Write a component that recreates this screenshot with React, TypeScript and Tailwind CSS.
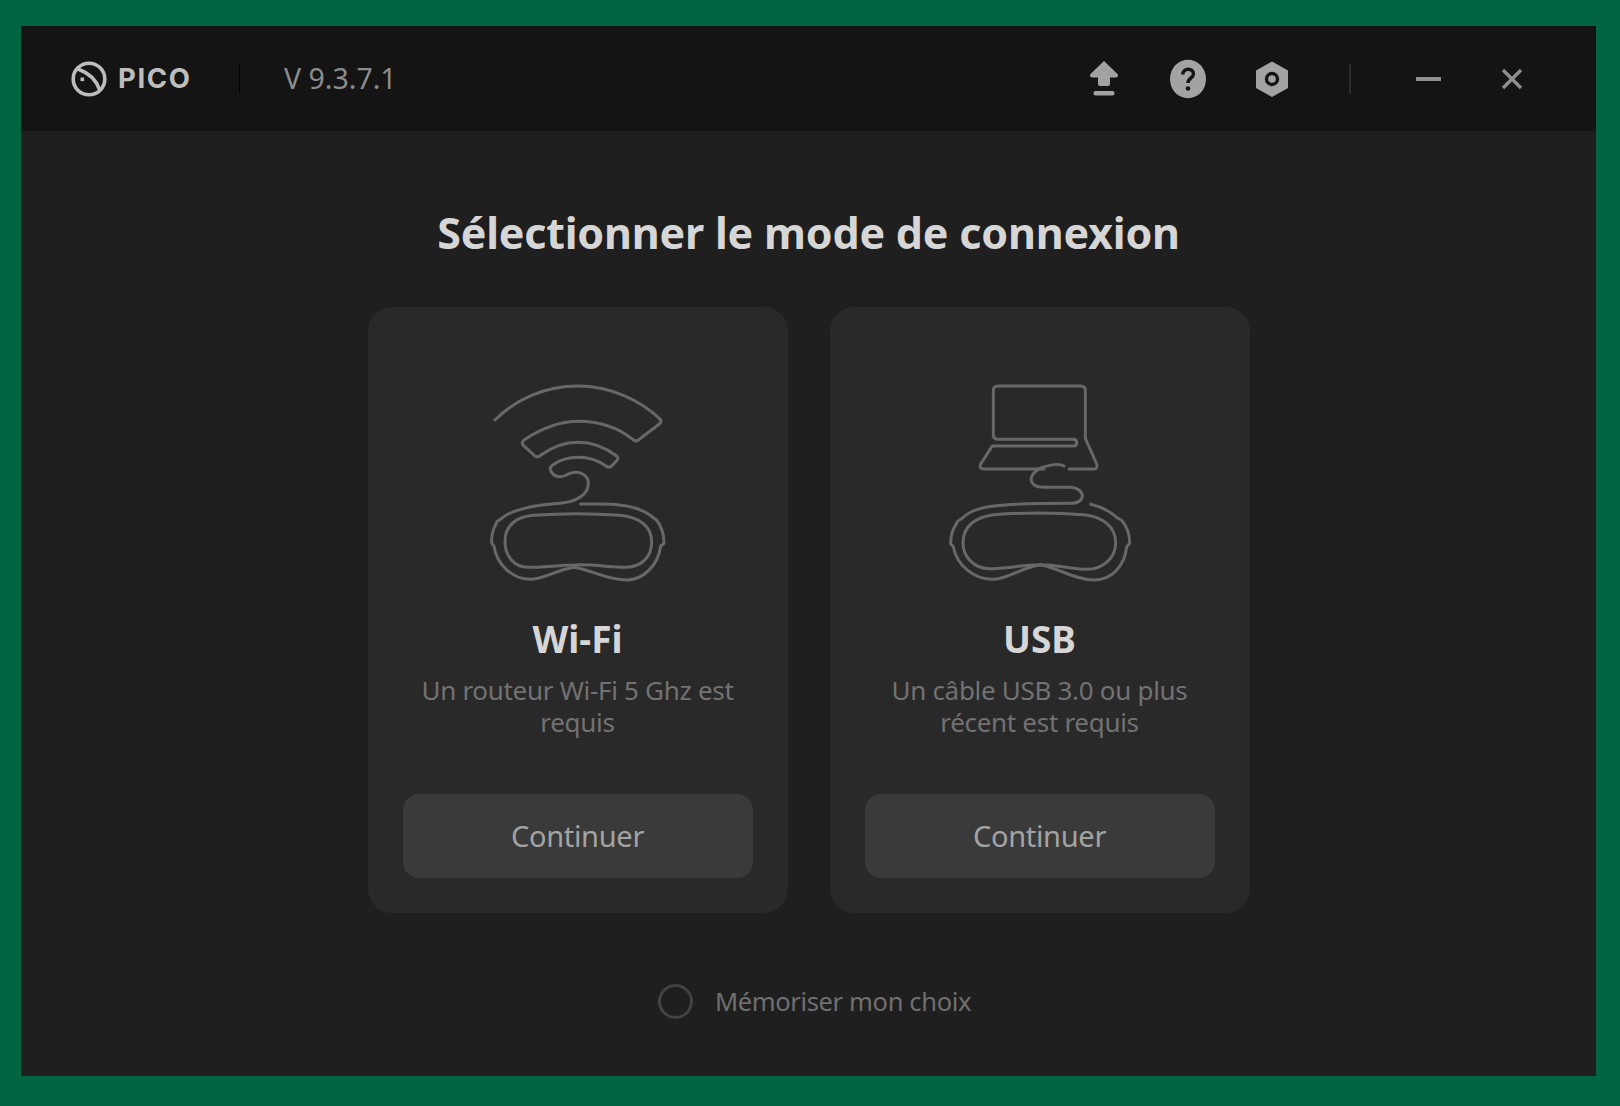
const headset =
  "C 200 405, 130 415, 95 445 L 88 450 Q 80 452 78 462 C 68 480, 64 500, 65 520 L 72 528 C 80 585, 130 630, 185 628 C 225 625, 260 600, 312 592 C 365 600, 410 630, 470 630 C 520 630, 565 585, 572 528 L 582 520 C 582 495, 575 470, 560 450 L 552 445";

function WifiIcon() {
  return (
    <svg width="210" height="220" viewBox="9 0 630 660" fill="none" stroke="#686868" strokeWidth="9" strokeLinecap="round" strokeLinejoin="round">
      <path d={`M75 150 C 140 85, 230 48, 322 48 C 420 48, 510 90, 570 147 Q 576 155 568 162 L 505 210 Q 497 216 488 208 C 440 170, 385 154, 325 154 C 265 154, 215 175, 162 210 Q 153 218 160 226 L 195 258 Q 204 264 212 256 C 245 232, 285 217, 325 217 C 365 217, 405 232, 440 258 Q 447 266 440 272 L 425 288 Q 417 295 408 288 C 385 272, 355 262, 325 262 C 295 262, 270 270, 248 285 Q 235 295 245 307 C 255 322, 275 325, 295 312 C 320 300, 355 310, 355 340 C 355 375, 320 395, 270 400 ${headset} C 520 415, 470 402, 400 402 L 332 402`} />
      <path d="M175 592 C 130 592, 105 555, 105 515 C 105 465, 140 440, 190 436 C 270 430, 370 430, 450 436 C 510 442, 545 470, 545 515 C 545 560, 515 592, 465 592 C 420 592, 370 582, 312 585 C 270 585, 220 592, 175 592 Z" />
    </svg>
  );
}

function UsbIcon() {
  return (
    <svg width="210" height="220" viewBox="13 0 630 660" fill="none" stroke="#686868" strokeWidth="9" strokeLinecap="round" strokeLinejoin="round">
      <path d="M464 205 L 464 62 Q 464 48 450 48 L 202 48 Q 188 48 188 62 L 188 195 Q 188 208 205 208 L 428 208 Q 438 208 438 218 Q 438 228 428 228 L 185 228 L 150 282 Q 145 297 160 297 L 340 297" />
      <path d="M464 205 L 498 282 Q 503 297 488 297 L 415 297" />
      <path d="M400 288 C 385 278, 345 285, 320 300 C 295 318, 290 350, 340 352 L 420 352 C 465 355, 468 400, 420 400 C 340 400, 260 400, 190 408 C 130 415, 110 430, 92 447 L 86 450 Q 78 454 76 464 C 64 480, 60 500, 60 522 L 68 530 C 78 585, 130 630, 190 628 C 235 625, 275 592, 328 584 C 380 592, 430 630, 490 630 C 545 630, 583 585, 588 530 L 597 520 C 597 495, 590 470, 572 450 L 562 445 C 540 425, 510 410, 480 403" />
      <path d="M175 596 C 130 596, 97 560, 97 518 C 97 465, 140 440, 190 434 C 270 428, 380 428, 460 434 C 515 440, 555 470, 555 518 C 555 565, 515 598, 470 598 C 425 598, 375 584, 328 584 C 280 584, 225 596, 175 596 Z" />
    </svg>
  );
}

function PicoLogo() {
  return (
    <svg width="38" height="38" viewBox="0 0 38 38" fill="none" stroke="#bdbdbd" strokeWidth="3.6" strokeLinecap="round">
      <circle cx="19" cy="19" r="15.8" />
      <path d="M9 9.5 C 16 12, 25 17, 29.5 29.5" />
      <rect x="10.5" y="17.5" width="3.6" height="3.6" fill="#bdbdbd" stroke="none" />
    </svg>
  );
}

function UploadIcon() {
  return (
    <svg width="40" height="40" viewBox="0 0 40 40" fill="#a3a3a3">
      <path d="M20 2 L 33.5 15 Q 35 18 32 18.5 L 26 18.5 L 26 25 Q 26 27 24 27 L 16 27 Q 14 27 14 25 L 14 18.5 L 8 18.5 Q 5 18 6.5 15 Z" />
      <rect x="9.5" y="32" width="21" height="4.5" rx="2" />
    </svg>
  );
}

function HelpIcon() {
  return (
    <svg width="40" height="40" viewBox="0 0 40 40">
      <ellipse cx="20" cy="20" rx="18" ry="19.3" fill="#a3a3a3" />
      <path d="M14.8 15.5 C 14.8 8.5, 25.5 8.5, 25.5 15 C 25.5 19, 20 19, 20 24" fill="none" stroke="#141414" strokeWidth="3.4" />
      <circle cx="20" cy="29.5" r="2.3" fill="#141414" />
    </svg>
  );
}

function GearIcon() {
  return (
    <svg width="40" height="40" viewBox="0 0 40 40">
      <path d="M20 2.5 L 36 11.5 L 36 29 L 20 38 L 4 29 L 4 11.5 Z" fill="#a3a3a3" />
      <circle cx="20" cy="20" r="5.5" fill="#a3a3a3" stroke="#141414" strokeWidth="3.4" />
    </svg>
  );
}

function ConnectionCard({ icon, title, lines }: { icon: React.ReactNode; title: string; lines: string[] }) {
  return (
    <div className="flex h-[606px] w-[420px] flex-col items-center rounded-[24px] bg-[#292929] px-[35px] pt-[63px] pb-[35px]">
      {icon}
      <h2 className="mt-[24px] text-[37px] leading-[50px] font-bold text-[#d6d6d6]">{title}</h2>
      <p className="mt-[10px] text-center text-[26px] leading-[32px] tracking-[-0.3px] text-[#727272]">
        {lines.map((l) => (
          <span key={l} className="block whitespace-nowrap">
            {l}
          </span>
        ))}
      </p>
      <button className="mt-auto h-[84px] w-[350px] rounded-[16px] bg-[#3a3a3a] text-[29px] tracking-[-0.3px] text-[#a3a3a3]">Continuer</button>
    </div>
  );
}

export default function App() {
  return (
    <div className="h-[1106px] w-[1620px] bg-[#016541] pt-[26px] pr-[24px] pb-[30px] pl-[21px] font-['Noto_Sans',sans-serif]">
      <div className="flex h-full flex-col bg-[#1f1f1f]">
        <header className="flex h-[105px] shrink-0 items-center bg-[#141414] pr-[64px] pl-[49px]">
          <PicoLogo />
          <span className="ml-[10px] w-[77px] font-['Inter',sans-serif] text-[27.5px] font-bold tracking-[1.6px] text-[#bdbdbd]">PICO</span>
          <div className="ml-[44px] h-[28px] w-px bg-black" />
          <span className="ml-[44px] text-[28.5px] text-[#8c8c8c]">V 9.3.7.1</span>
          <div className="ml-auto flex items-center">
            <UploadIcon />
            <div className="ml-[44px]">
              <HelpIcon />
            </div>
            <div className="ml-[44px]">
              <GearIcon />
            </div>
            <div className="ml-[57px] h-[30px] w-[2px] bg-[#2c2c2c]" />
            <div className="ml-[57px] flex h-[40px] w-[40px] items-center justify-center">
              <div className="h-[4px] w-[25px] bg-[#8f8f8f]" />
            </div>
            <svg className="ml-[44px]" width="40" height="40" viewBox="0 0 40 40" stroke="#8f8f8f" strokeWidth="3.4">
              <path d="M11 11 L 29 29 M29 11 L 11 29" />
            </svg>
          </div>
        </header>
        <main className="flex flex-1 flex-col items-center">
          <h1 className="mt-[73px] text-[43px] leading-[58px] font-bold tracking-[-0.2px] text-[#d6d6d6]">Sélectionner le mode de connexion</h1>
          <div className="mt-[45px] flex gap-[42px]">
            <ConnectionCard icon={<WifiIcon />} title="Wi-Fi" lines={["Un routeur Wi-Fi 5 Ghz est", "requis"]} />
            <ConnectionCard icon={<UsbIcon />} title="USB" lines={["Un câble USB 3.0 ou plus", "récent est requis"]} />
          </div>
          <label className="mt-[69px] ml-[12px] flex items-center gap-[22px]">
            <span className="h-[35px] w-[35px] rounded-full border-[3px] border-[#424242]" />
            <span className="text-[25.5px] tracking-[-0.35px] text-[#707070]">Mémoriser mon choix</span>
          </label>
        </main>
      </div>
    </div>
  );
}
